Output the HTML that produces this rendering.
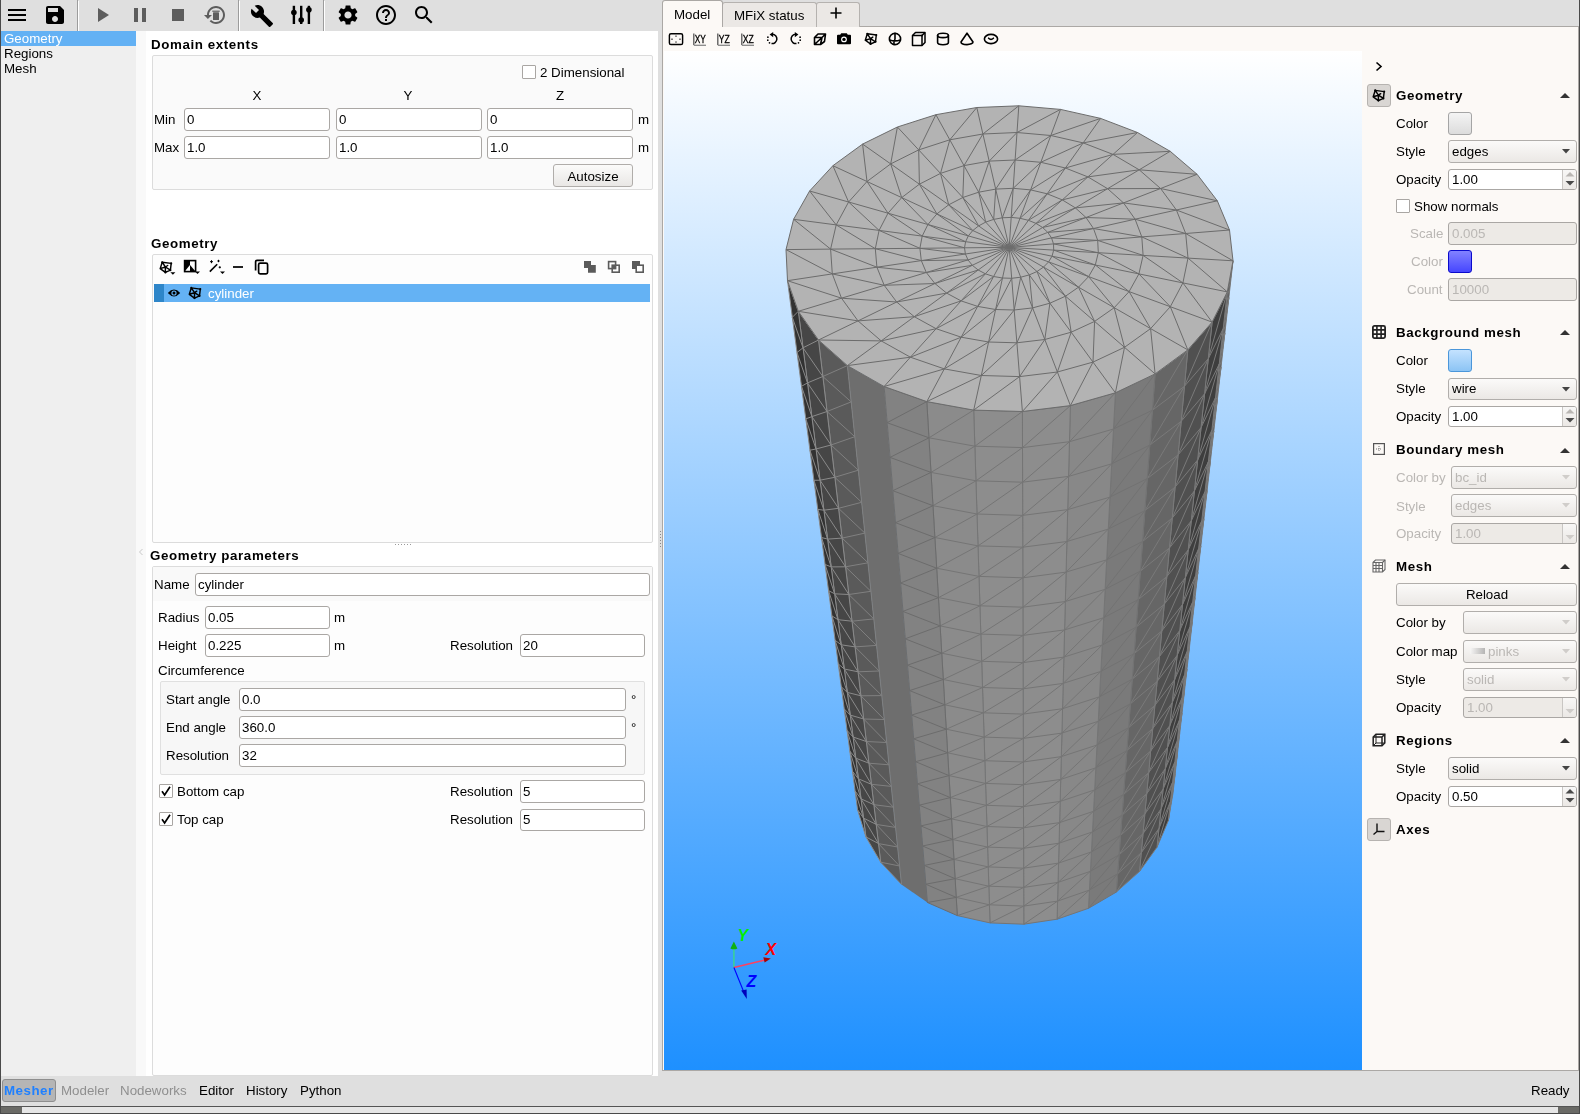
<!DOCTYPE html><html><head><meta charset='utf-8'><style>
html,body{margin:0;padding:0;width:1580px;height:1114px;overflow:hidden;background:#dfdfdf;font-family:"Liberation Sans",sans-serif;}
.t{position:absolute;white-space:nowrap;line-height:16px;font-family:"Liberation Sans",sans-serif;-webkit-font-smoothing:antialiased;will-change:transform;}
.b{position:absolute;}
</style></head><body>
<div class='b' style='left:1px;top:31px;width:135px;height:1045px;background:#efefef;'></div>
<div class='b' style='left:1px;top:31px;width:135px;height:15px;background:#63b1f4;'></div>
<div class='t' style='left:3.50px;top:31.38px;font-size:13.33px;color:#fff;'>Geometry</div>
<div class='t' style='left:3.50px;top:46.38px;font-size:13.33px;color:#000;'>Regions</div>
<div class='t' style='left:3.50px;top:60.98px;font-size:13.33px;color:#000;'>Mesh</div>
<div class='b' style='left:136px;top:31px;width:10px;height:1045px;background:#f9f9f9;'></div>
<div class='b' style='left:146px;top:31px;width:512px;height:1045px;background:#ffffff;'></div>
<div class='t' style='left:150.50px;top:36.78px;font-size:13.33px;color:#000;font-weight:bold;letter-spacing:0.6px;'>Domain extents</div>
<div class='b' style='left:152px;top:55px;width:501px;height:135px;background:#fafafa;border:1px solid #dcdcdc;border-radius:2px;box-sizing:border-box;'></div>
<div class='b' style='left:522px;top:65px;width:14px;height:14px;background:#fff;border:1px solid #a9a6a3;border-radius:1px;box-sizing:border-box;'></div>
<div class='t' style='left:540.40px;top:65.38px;font-size:13.33px;color:#000;'>2 Dimensional</div>
<div class='t' style='left:157.00px;width:200px;text-align:center;top:87.78px;font-size:13.33px;color:#000;'>X</div>
<div class='t' style='left:308.00px;width:200px;text-align:center;top:87.78px;font-size:13.33px;color:#000;'>Y</div>
<div class='t' style='left:460.00px;width:200px;text-align:center;top:87.78px;font-size:13.33px;color:#000;'>Z</div>
<div class='t' style='left:153.60px;top:112.18px;font-size:13.33px;color:#000;'>Min</div>
<div class='t' style='left:153.60px;top:140.38px;font-size:13.33px;color:#000;'>Max</div>
<div class='b' style='left:184px;top:108px;width:146px;height:23px;background:#ffffff;border:1px solid #aaa7a4;border-radius:3px;box-sizing:border-box;'></div>
<div class='t' style='left:186.50px;top:111.68px;font-size:13.33px;color:#000;'>0</div>
<div class='b' style='left:184px;top:136px;width:146px;height:23px;background:#ffffff;border:1px solid #aaa7a4;border-radius:3px;box-sizing:border-box;'></div>
<div class='t' style='left:186.50px;top:139.68px;font-size:13.33px;color:#000;'>1.0</div>
<div class='b' style='left:336px;top:108px;width:146px;height:23px;background:#ffffff;border:1px solid #aaa7a4;border-radius:3px;box-sizing:border-box;'></div>
<div class='t' style='left:338.50px;top:111.68px;font-size:13.33px;color:#000;'>0</div>
<div class='b' style='left:336px;top:136px;width:146px;height:23px;background:#ffffff;border:1px solid #aaa7a4;border-radius:3px;box-sizing:border-box;'></div>
<div class='t' style='left:338.50px;top:139.68px;font-size:13.33px;color:#000;'>1.0</div>
<div class='b' style='left:487px;top:108px;width:146px;height:23px;background:#ffffff;border:1px solid #aaa7a4;border-radius:3px;box-sizing:border-box;'></div>
<div class='t' style='left:489.50px;top:111.68px;font-size:13.33px;color:#000;'>0</div>
<div class='b' style='left:487px;top:136px;width:146px;height:23px;background:#ffffff;border:1px solid #aaa7a4;border-radius:3px;box-sizing:border-box;'></div>
<div class='t' style='left:489.50px;top:139.68px;font-size:13.33px;color:#000;'>1.0</div>
<div class='t' style='left:637.60px;top:112.18px;font-size:13.33px;color:#000;'>m</div>
<div class='t' style='left:637.60px;top:140.38px;font-size:13.33px;color:#000;'>m</div>
<div class='b' style='left:553px;top:164px;width:80px;height:23px;background:linear-gradient(#fbfbfa,#e9e7e5);border:1px solid #b0adaa;border-radius:3px;box-sizing:border-box;'></div>
<div class='t' style='left:493.00px;width:200px;text-align:center;top:168.88px;font-size:13.33px;color:#000;'>Autosize</div>
<div class='t' style='left:150.50px;top:236.08px;font-size:13.33px;color:#000;font-weight:bold;letter-spacing:0.6px;'>Geometry</div>
<div class='b' style='left:152px;top:254px;width:501px;height:289px;background:#fdfdfd;border:1px solid #dcdcdc;border-radius:2px;box-sizing:border-box;'></div>
<div class='b' style='left:154px;top:284px;width:496px;height:18px;background:#64b2f4;'></div>
<div class='b' style='left:154px;top:284px;width:10px;height:18px;background:#2e86c9;'></div>
<div class='t' style='left:208.40px;top:285.68px;font-size:13.33px;color:#fff;'>cylinder</div>
<svg class='b' style='left:159px;top:259px;' width='19' height='17' viewBox='0 0 19 17'><path d='M3.20 3.20 L12.20 4.40 L11.40 11.20 L6.40 13.40 L1.20 9.60Z M6.40 8.00L3.20 3.20 M6.40 8.00L11.40 11.20 M6.40 8.00L6.40 13.40 M6.40 8.00L1.20 9.60 M6.40 8.00L8.70 6.50' fill='none' stroke='#000' stroke-width='1.45' stroke-linejoin='round' stroke-linecap='round'/><circle cx='3.20' cy='3.20' r='1.05' fill='#000'/><circle cx='12.20' cy='4.40' r='1.05' fill='#000'/><circle cx='11.40' cy='11.20' r='1.05' fill='#000'/><circle cx='6.40' cy='13.40' r='1.05' fill='#000'/><path d='M11.4 13.2 h5 l-2.5 2.6z' fill='#000'/></svg>
<svg class='b' style='left:183px;top:259px;' width='19' height='17' viewBox='0 0 19 17'><rect x='1.6' y='1.6' width='11' height='11' fill='none' stroke='#000' stroke-width='1.6'/><path d='M1.6 1.6 H7 V6 L1.6 12.6Z' fill='#000'/><path d='M7 6 L12.6 12.6 H7Z' fill='#000'/><path d='M12 12.4 h5 l-2.5 2.6z' fill='#000'/></svg>
<svg class='b' style='left:208px;top:259px;' width='19' height='17' viewBox='0 0 19 17'><path d='M1.8 12.6 L9.2 5.2' stroke='#000' stroke-width='1.6'/><path d='M3.5 1.2 v3 M2 2.7 h3 M10.5 0.8 v2.4 M9.3 2 h2.4 M11.8 7.2 v2.2 M10.7 8.3 h2.2' stroke='#000' stroke-width='1'/><path d='M12 12.4 h5 l-2.5 2.6z' fill='#000'/></svg>
<div class='b' style='left:233px;top:266px;width:10px;height:2px;background:#222;'></div>
<svg class='b' style='left:254px;top:259px;' width='16' height='16' viewBox='0 0 16 16'><rect x='4.6' y='4.2' width='9' height='10.6' rx='1.5' fill='none' stroke='#000' stroke-width='1.7'/><path d='M1.6 11.5 V2.8 Q1.6 1.4 3 1.4 H10' fill='none' stroke='#000' stroke-width='1.7'/></svg>
<svg class='b' style='left:583px;top:260px;' width='14' height='14' viewBox='0 0 14 14'><path d='M1 1 H8 V5 H12.8 V12.8 H5 V8 H1Z' fill='#5b5b5b'/></svg>
<svg class='b' style='left:607px;top:260px;' width='14' height='14' viewBox='0 0 14 14'><rect x='1.6' y='1.6' width='7' height='7' fill='none' stroke='#5b5b5b' stroke-width='1.6'/><rect x='5.2' y='5.2' width='7' height='7' fill='none' stroke='#5b5b5b' stroke-width='1.6'/><rect x='5.2' y='5.2' width='3.4' height='3.4' fill='#5b5b5b'/></svg>
<svg class='b' style='left:631px;top:260px;' width='14' height='14' viewBox='0 0 14 14'><rect x='1' y='1' width='8' height='8' fill='#5b5b5b'/><rect x='5.2' y='5.2' width='7' height='7' fill='#fdfdfd' stroke='#5b5b5b' stroke-width='1.6'/></svg>
<svg class='b' style='left:167px;top:287px;' width='14' height='12' viewBox='0 0 14 12'><path d='M0.8 6 Q7 -0.8 13.2 6 Q7 12.8 0.8 6Z' fill='#000'/><circle cx='7' cy='6' r='2.6' fill='#64b2f4'/><circle cx='7' cy='6' r='1.5' fill='#000'/></svg>
<svg class='b' style='left:188px;top:286px;' width='14' height='14' viewBox='0 0 14 14'><path d='M3.30 1.90 L12.30 3.10 L11.50 9.90 L6.50 12.10 L1.30 8.30Z M6.50 6.70L3.30 1.90 M6.50 6.70L11.50 9.90 M6.50 6.70L6.50 12.10 M6.50 6.70L1.30 8.30 M6.50 6.70L8.80 5.20' fill='none' stroke='#000' stroke-width='1.45' stroke-linejoin='round' stroke-linecap='round'/><circle cx='3.30' cy='1.90' r='1.05' fill='#000'/><circle cx='12.30' cy='3.10' r='1.05' fill='#000'/><circle cx='11.50' cy='9.90' r='1.05' fill='#000'/><circle cx='6.50' cy='12.10' r='1.05' fill='#000'/></svg>
<div class='b' style='left:395px;top:544px;width:1px;height:1px;background:#999;'></div>
<div class='b' style='left:398px;top:544px;width:1px;height:1px;background:#999;'></div>
<div class='b' style='left:401px;top:544px;width:1px;height:1px;background:#999;'></div>
<div class='b' style='left:404px;top:544px;width:1px;height:1px;background:#999;'></div>
<div class='b' style='left:407px;top:544px;width:1px;height:1px;background:#999;'></div>
<div class='b' style='left:410px;top:544px;width:1px;height:1px;background:#999;'></div>
<svg class='b' style='left:138px;top:548px;' width='6' height='8' viewBox='0 0 6 8'><path d='M4.5 1 L1.5 4 L4.5 7' stroke='#c8c8c8' stroke-width='1' fill='none'/></svg>
<div class='t' style='left:150.00px;top:548.38px;font-size:13.33px;color:#000;font-weight:bold;letter-spacing:0.6px;'>Geometry parameters</div>
<div class='b' style='left:152px;top:566px;width:501px;height:510px;background:#fdfdfd;border:1px solid #dcdcdc;border-radius:2px;box-sizing:border-box;'></div>
<div class='b' style='left:153px;top:567px;width:499px;height:34px;background:#f9f9f9;'></div>
<div class='t' style='left:153.50px;top:577.38px;font-size:13.33px;color:#000;'>Name</div>
<div class='b' style='left:195px;top:573px;width:455px;height:23px;background:#ffffff;border:1px solid #aaa7a4;border-radius:3px;box-sizing:border-box;'></div>
<div class='t' style='left:197.50px;top:576.68px;font-size:13.33px;color:#000;'>cylinder</div>
<div class='t' style='left:158.30px;top:609.68px;font-size:13.33px;color:#000;'>Radius</div>
<div class='b' style='left:205px;top:606px;width:125px;height:23px;background:#ffffff;border:1px solid #aaa7a4;border-radius:3px;box-sizing:border-box;'></div>
<div class='t' style='left:207.50px;top:609.68px;font-size:13.33px;color:#000;'>0.05</div>
<div class='t' style='left:334.40px;top:609.68px;font-size:13.33px;color:#000;'>m</div>
<div class='t' style='left:158.30px;top:637.88px;font-size:13.33px;color:#000;'>Height</div>
<div class='b' style='left:205px;top:634px;width:125px;height:23px;background:#ffffff;border:1px solid #aaa7a4;border-radius:3px;box-sizing:border-box;'></div>
<div class='t' style='left:207.50px;top:637.68px;font-size:13.33px;color:#000;'>0.225</div>
<div class='t' style='left:334.40px;top:637.88px;font-size:13.33px;color:#000;'>m</div>
<div class='t' style='left:450.30px;top:637.88px;font-size:13.33px;color:#000;'>Resolution</div>
<div class='b' style='left:520px;top:634px;width:125px;height:23px;background:#ffffff;border:1px solid #aaa7a4;border-radius:3px;box-sizing:border-box;'></div>
<div class='t' style='left:522.50px;top:637.68px;font-size:13.33px;color:#000;'>20</div>
<div class='t' style='left:158.30px;top:663.48px;font-size:13.33px;color:#000;'>Circumference</div>
<div class='b' style='left:160px;top:681px;width:485px;height:94px;background:#f7f7f7;border:1px solid #e0e0e0;border-radius:2px;box-sizing:border-box;'></div>
<div class='t' style='left:166.20px;top:692.08px;font-size:13.33px;color:#000;'>Start angle</div>
<div class='b' style='left:239px;top:688px;width:387px;height:23px;background:#ffffff;border:1px solid #aaa7a4;border-radius:3px;box-sizing:border-box;'></div>
<div class='t' style='left:241.50px;top:691.68px;font-size:13.33px;color:#000;'>0.0</div>
<div class='t' style='left:631.00px;top:692.08px;font-size:13.33px;color:#000;'>°</div>
<div class='t' style='left:166.20px;top:720.08px;font-size:13.33px;color:#000;'>End angle</div>
<div class='b' style='left:239px;top:716px;width:387px;height:23px;background:#ffffff;border:1px solid #aaa7a4;border-radius:3px;box-sizing:border-box;'></div>
<div class='t' style='left:241.50px;top:719.68px;font-size:13.33px;color:#000;'>360.0</div>
<div class='t' style='left:631.00px;top:720.08px;font-size:13.33px;color:#000;'>°</div>
<div class='t' style='left:166.20px;top:748.08px;font-size:13.33px;color:#000;'>Resolution</div>
<div class='b' style='left:239px;top:744px;width:387px;height:23px;background:#ffffff;border:1px solid #aaa7a4;border-radius:3px;box-sizing:border-box;'></div>
<div class='t' style='left:241.50px;top:747.68px;font-size:13.33px;color:#000;'>32</div>
<div class='b' style='left:159px;top:784px;width:14px;height:14px;background:#fff;border:1px solid #a9a6a3;border-radius:1px;box-sizing:border-box;'></div>
<svg class='b' style='left:159px;top:784px;' width='14' height='14' viewBox='0 0 14 14'><path d='M3 7.2 L5.6 11 L11 2.8' stroke='#000' stroke-width='1.7' fill='none'/></svg>
<div class='t' style='left:177.40px;top:783.98px;font-size:13.33px;color:#000;'>Bottom cap</div>
<div class='t' style='left:450.30px;top:783.98px;font-size:13.33px;color:#000;'>Resolution</div>
<div class='b' style='left:520px;top:780px;width:125px;height:23px;background:#ffffff;border:1px solid #aaa7a4;border-radius:3px;box-sizing:border-box;'></div>
<div class='t' style='left:522.50px;top:783.68px;font-size:13.33px;color:#000;'>5</div>
<div class='b' style='left:159px;top:812px;width:14px;height:14px;background:#fff;border:1px solid #a9a6a3;border-radius:1px;box-sizing:border-box;'></div>
<svg class='b' style='left:159px;top:812px;' width='14' height='14' viewBox='0 0 14 14'><path d='M3 7.2 L5.6 11 L11 2.8' stroke='#000' stroke-width='1.7' fill='none'/></svg>
<div class='t' style='left:177.40px;top:811.98px;font-size:13.33px;color:#000;'>Top cap</div>
<div class='t' style='left:450.30px;top:811.98px;font-size:13.33px;color:#000;'>Resolution</div>
<div class='b' style='left:520px;top:809px;width:125px;height:22px;background:#ffffff;border:1px solid #aaa7a4;border-radius:3px;box-sizing:border-box;'></div>
<div class='t' style='left:522.50px;top:812.18px;font-size:13.33px;color:#000;'>5</div>
<div class='b' style='left:1px;top:0px;width:1578px;height:31px;background:#dfdfdf;'></div>
<svg class='b' style='left:5px;top:3px;' width='24.0' height='24.0' viewBox='0 0 24 24'><path d='M3 18h18v-2H3v2zm0-5h18v-2H3v2zm0-7v2h18V6H3z' fill='#000'/></svg>
<svg class='b' style='left:43px;top:3px;' width='24.0' height='24.0' viewBox='0 0 24 24'><path d='M17 3H5c-1.11 0-2 .9-2 2v14c0 1.1.89 2 2 2h14c1.1 0 2-.9 2-2V7l-4-4zm-5 16c-1.66 0-3-1.34-3-3s1.34-3 3-3 3 1.34 3 3-1.34 3-3 3zm3-10H5V5h10v4z' fill='#000'/></svg>
<div class='b' style='left:77px;top:0px;width:1px;height:31px;background:#9c9c9c;'></div>
<div class='b' style='left:78px;top:1px;width:1px;height:30px;background:#ffffff;'></div>
<svg class='b' style='left:90px;top:3px;' width='24.0' height='24.0' viewBox='0 0 24 24'><path d='M8 5v14l11-7z' fill='#5d5d5d'/></svg>
<svg class='b' style='left:128px;top:3px;' width='24.0' height='24.0' viewBox='0 0 24 24'><path d='M6 19h4V5H6v14zm8-14v14h4V5h-4z' fill='#5d5d5d'/></svg>
<svg class='b' style='left:166px;top:3px;' width='24.0' height='24.0' viewBox='0 0 24 24'><path d='M6 6h12v12H6z' fill='#5d5d5d'/></svg>
<svg class='b' style='left:203px;top:3px;' width='24' height='24' viewBox='0 0 24 24'><path d='M13 3c-4.97 0-9 4.03-9 9H1l3.9 3.9L9 12H6c0-3.87 3.13-7 7-7s7 3.13 7 7-3.13 7-7 7c-1.93 0-3.68-.79-4.94-2.06l-1.42 1.42C8.27 19.99 10.51 21 13 21c4.97 0 9-4.03 9-9s-4.03-9-9-9z' fill='#5d5d5d'/><rect x='10' y='9.3' width='6' height='7.7' rx='0.6' fill='#5d5d5d'/><rect x='9.3' y='7.6' width='7.4' height='1.2' fill='#5d5d5d'/></svg>
<div class='b' style='left:238px;top:0px;width:1px;height:31px;background:#9c9c9c;'></div>
<div class='b' style='left:239px;top:1px;width:1px;height:30px;background:#ffffff;'></div>
<svg class='b' style='left:250.4px;top:3.6px;' width='24.0' height='24.0' viewBox='0 0 24 24'><path d='M22.7 19l-9.1-9.1c.9-2.3.4-5-1.5-6.9-2-2-5-2.4-7.4-1.3L9 6 6 9 1.6 4.7C.4 7.1.9 10.1 2.9 12.1c1.9 1.9 4.6 2.4 6.9 1.5l9.1 9.1c.4.4 1 .4 1.4 0l2.3-2.3c.5-.4.5-1.1.1-1.4z' fill='#000'/></svg>
<svg class='b' style='left:289px;top:4px;' width='24' height='22' viewBox='0 0 24 22'><g fill='#000'><rect x='3.7' y='1.8' width='2.4' height='18.2'/><rect x='11' y='1.8' width='2.4' height='18.2'/><rect x='18.7' y='1.8' width='2.4' height='18.2'/><circle cx='4.9' cy='8.5' r='2.8'/><circle cx='12.2' cy='16' r='2.8'/><circle cx='19.9' cy='5.8' r='2.8'/></g></svg>
<div class='b' style='left:323px;top:0px;width:1px;height:31px;background:#9c9c9c;'></div>
<div class='b' style='left:324px;top:1px;width:1px;height:30px;background:#ffffff;'></div>
<svg class='b' style='left:335.5px;top:3px;' width='24.0' height='24.0' viewBox='0 0 24 24'><path d='M19.14 12.94c.04-.3.06-.61.06-.94 0-.32-.02-.64-.07-.94l2.03-1.58c.18-.14.23-.41.12-.61l-1.92-3.32c-.12-.22-.37-.29-.59-.22l-2.39.96c-.5-.38-1.03-.7-1.62-.94l-.36-2.54c-.04-.24-.24-.41-.48-.41h-3.84c-.24 0-.43.17-.47.41l-.36 2.54c-.59.24-1.13.57-1.62.94l-2.39-.96c-.22-.08-.47 0-.59.22L2.74 8.87c-.12.21-.08.47.12.61l2.03 1.58c-.05.3-.09.63-.09.94s.02.64.07.94l-2.03 1.58c-.18.14-.23.41-.12.61l1.92 3.32c.12.22.37.29.59.22l2.39-.96c.5.38 1.03.7 1.62.94l.36 2.54c.05.24.24.41.48.41h3.84c.24 0 .44-.17.47-.41l.36-2.54c.59-.24 1.13-.56 1.62-.94l2.39.96c.22.08.47 0 .59-.22l1.92-3.32c.12-.22.07-.47-.12-.61l-2.01-1.58zM12 15.6c-1.98 0-3.6-1.62-3.6-3.6s1.62-3.6 3.6-3.6 3.6 1.62 3.6 3.6-1.62 3.6-3.6 3.6z' fill='#000'/></svg>
<svg class='b' style='left:374px;top:3px;' width='24.0' height='24.0' viewBox='0 0 24 24'><path d='M11 18h2v-2h-2v2zm1-16C6.48 2 2 6.48 2 12s4.48 10 10 10 10-4.48 10-10S17.52 2 12 2zm0 18c-4.41 0-8-3.59-8-8s3.59-8 8-8 8 3.59 8 8-3.59 8-8 8zm0-14c-2.21 0-4 1.79-4 4h2c0-1.1.9-2 2-2s2 .9 2 2c0 2-3 1.75-3 5h2c0-2.25 3-2.5 3-5 0-2.21-1.79-4-4-4z' fill='#000'/></svg>
<svg class='b' style='left:412px;top:3.3px;' width='24.0' height='24.0' viewBox='0 0 24 24'><path d='M15.5 14h-.79l-.28-.27C15.41 12.59 16 11.11 16 9.5 16 5.91 13.09 3 9.5 3S3 5.91 3 9.5 5.91 16 9.5 16c1.61 0 3.09-.59 4.23-1.57l.27.28v.79l5 4.99L20.49 19l-4.99-5zm-6 0C7.01 14 5 11.99 5 9.5S7.01 5 9.5 5 14 7.01 14 9.5 11.99 14 9.5 14z' fill='#000'/></svg>
<div class='b' style='left:658px;top:31px;width:4px;height:1045px;background:#dfdfdf;'></div>
<div class='b' style='left:660px;top:531px;width:1px;height:1px;background:#8a8a8a;'></div>
<div class='b' style='left:660px;top:534px;width:1px;height:1px;background:#8a8a8a;'></div>
<div class='b' style='left:660px;top:537px;width:1px;height:1px;background:#8a8a8a;'></div>
<div class='b' style='left:660px;top:540px;width:1px;height:1px;background:#8a8a8a;'></div>
<div class='b' style='left:660px;top:543px;width:1px;height:1px;background:#8a8a8a;'></div>
<div class='b' style='left:660px;top:546px;width:1px;height:1px;background:#8a8a8a;'></div>
<div class='b' style='left:662px;top:26px;width:917px;height:1045px;background:#fcf9f6;border:1px solid #aba8a5;box-sizing:border-box;'></div>
<div class='b' style='left:722px;top:2px;width:95px;height:25px;background:#ebe8e5;border:1px solid #b5b2af;border-bottom:none;border-radius:3px 3px 0 0;box-sizing:border-box;'></div>
<div class='b' style='left:816px;top:2px;width:44px;height:25px;background:#ebe8e5;border:1px solid #b5b2af;border-bottom:none;border-radius:3px 3px 0 0;box-sizing:border-box;'></div>
<div class='b' style='left:662px;top:0px;width:61px;height:27px;background:#fcf9f6;border:1px solid #aba8a5;border-bottom:none;border-radius:3px 3px 0 0;box-sizing:border-box;'></div>
<div class='t' style='left:673.60px;top:7.38px;font-size:13.33px;color:#000;'>Model</div>
<div class='t' style='left:733.50px;top:8.38px;font-size:13.33px;color:#000;'>MFiX status</div>
<svg class='b' style='left:830px;top:7px;' width='12' height='12' viewBox='0 0 12 12'><path d='M5.2 0.5h1.6v4.7h4.7v1.6H6.8v4.7H5.2V6.8H0.5V5.2h4.7z' fill='#000'/></svg>
<div class='b' style='left:664px;top:51px;width:698px;height:1019px;background:linear-gradient(#ffffff,#1e90ff);'></div>
<svg class='b' style='left:664px;top:51px' width='698' height='1019' viewBox='664 51 698 1019'><polygon points='1233.0,260.8 1227.3,291.9 1168.3,820.7 1173.0,793.0' fill='#2a2a2a'/><path d='M1173.0,793.0L1168.3,820.7M1175.1,773.9L1170.4,801.7M1177.4,754.2L1172.6,782.2M1179.6,733.9L1174.8,762.1M1182.0,712.9L1177.1,741.4M1184.4,691.3L1179.5,720.0M1187.0,669.0L1182.0,697.9M1189.6,646.0L1184.5,675.1M1192.2,622.2L1187.2,651.5M1195.0,597.7L1189.9,627.1M1197.9,572.3L1192.7,601.9M1200.8,546.0L1195.6,575.8M1203.9,518.8L1198.6,548.8M1207.1,490.6L1201.8,520.8M1210.4,461.4L1205.0,491.7M1213.8,431.0L1208.4,461.6M1217.4,399.6L1211.9,430.2M1221.1,366.9L1215.5,397.7M1224.9,332.9L1219.3,363.8M1228.9,297.6L1223.2,328.6M1233.0,260.8L1227.3,291.9M1233.0,260.8L1173.0,793.0M1227.3,291.9L1168.3,820.7M1168.3,820.7L1175.1,773.9M1170.4,801.7L1177.4,754.2M1172.6,782.2L1179.6,733.9M1174.8,762.1L1182.0,712.9M1177.1,741.4L1184.4,691.3M1179.5,720.0L1187.0,669.0M1182.0,697.9L1189.6,646.0M1184.5,675.1L1192.2,622.2M1187.2,651.5L1195.0,597.7M1189.9,627.1L1197.9,572.3M1192.7,601.9L1200.8,546.0M1195.6,575.8L1203.9,518.8M1198.6,548.8L1207.1,490.6M1201.8,520.8L1210.4,461.4M1205.0,491.7L1213.8,431.0M1208.4,461.6L1217.4,399.6M1211.9,430.2L1221.1,366.9M1215.5,397.7L1224.9,332.9M1219.3,363.8L1228.9,297.6M1223.2,328.6L1233.0,260.8' stroke='#7a7a7a' stroke-width='1.0' fill='none'/><polygon points='1227.3,291.9 1212.1,322.1 1157.0,847.2 1168.3,820.7' fill='#3e3e3e'/><path d='M1168.3,820.7L1157.0,847.2M1170.4,801.7L1159.0,828.4M1172.6,782.2L1161.0,809.1M1174.8,762.1L1163.1,789.2M1177.1,741.4L1165.3,768.7M1179.5,720.0L1167.5,747.5M1182.0,697.9L1169.8,725.6M1184.5,675.1L1172.1,703.0M1187.2,651.5L1174.6,679.7M1189.9,627.1L1177.1,655.5M1192.7,601.9L1179.8,630.5M1195.6,575.8L1182.5,604.6M1198.6,548.8L1185.3,577.7M1201.8,520.8L1188.2,549.9M1205.0,491.7L1191.2,521.0M1208.4,461.6L1194.4,491.0M1211.9,430.2L1197.7,459.9M1215.5,397.7L1201.1,427.5M1219.3,363.8L1204.6,393.8M1223.2,328.6L1208.3,358.7M1227.3,291.9L1212.1,322.1M1227.3,291.9L1168.3,820.7M1212.1,322.1L1157.0,847.2M1157.0,847.2L1170.4,801.7M1159.0,828.4L1172.6,782.2M1161.0,809.1L1174.8,762.1M1163.1,789.2L1177.1,741.4M1165.3,768.7L1179.5,720.0M1167.5,747.5L1182.0,697.9M1169.8,725.6L1184.5,675.1M1172.1,703.0L1187.2,651.5M1174.6,679.7L1189.9,627.1M1177.1,655.5L1192.7,601.9M1179.8,630.5L1195.6,575.8M1182.5,604.6L1198.6,548.8M1185.3,577.7L1201.8,520.8M1188.2,549.9L1205.0,491.7M1191.2,521.0L1208.4,461.6M1194.4,491.0L1211.9,430.2M1197.7,459.9L1215.5,397.7M1201.1,427.5L1219.3,363.8M1204.6,393.8L1223.2,328.6M1208.3,358.7L1227.3,291.9' stroke='#7a7a7a' stroke-width='1.0' fill='none'/><polygon points='1212.1,322.1 1187.8,349.9 1139.5,871.4 1157.0,847.2' fill='#505050'/><path d='M1157.0,847.2L1139.5,871.4M1159.0,828.4L1141.2,852.8M1161.0,809.1L1143.0,833.7M1163.1,789.2L1144.8,814.0M1165.3,768.7L1146.7,793.7M1167.5,747.5L1148.6,772.7M1169.8,725.6L1150.6,751.0M1172.1,703.0L1152.7,728.6M1174.6,679.7L1154.9,705.4M1177.1,655.5L1157.1,681.5M1179.8,630.5L1159.4,656.6M1182.5,604.6L1161.8,630.9M1185.3,577.7L1164.2,604.3M1188.2,549.9L1166.8,576.6M1191.2,521.0L1169.5,547.9M1194.4,491.0L1172.2,518.1M1197.7,459.9L1175.1,487.1M1201.1,427.5L1178.1,454.9M1204.6,393.8L1181.2,421.3M1208.3,358.7L1184.4,386.3M1212.1,322.1L1187.8,349.9M1212.1,322.1L1157.0,847.2M1187.8,349.9L1139.5,871.4M1139.5,871.4L1159.0,828.4M1141.2,852.8L1161.0,809.1M1143.0,833.7L1163.1,789.2M1144.8,814.0L1165.3,768.7M1146.7,793.7L1167.5,747.5M1148.6,772.7L1169.8,725.6M1150.6,751.0L1172.1,703.0M1152.7,728.6L1174.6,679.7M1154.9,705.4L1177.1,655.5M1157.1,681.5L1179.8,630.5M1159.4,656.6L1182.5,604.6M1161.8,630.9L1185.3,577.7M1164.2,604.3L1188.2,549.9M1166.8,576.6L1191.2,521.0M1169.5,547.9L1194.4,491.0M1172.2,518.1L1197.7,459.9M1175.1,487.1L1201.1,427.5M1178.1,454.9L1204.6,393.8M1181.2,421.3L1208.3,358.7M1184.4,386.3L1212.1,322.1' stroke='#7a7a7a' stroke-width='1.0' fill='none'/><polygon points='1187.8,349.9 1155.1,373.9 1116.3,892.1 1139.5,871.4' fill='#666666'/><path d='M1139.5,871.4L1116.3,892.1M1141.2,852.8L1117.7,873.7M1143.0,833.7L1119.1,854.8M1144.8,814.0L1120.6,835.3M1146.7,793.7L1122.1,815.1M1148.6,772.7L1123.7,794.3M1150.6,751.0L1125.3,772.8M1152.7,728.6L1126.9,750.6M1154.9,705.4L1128.7,727.6M1157.1,681.5L1130.4,703.8M1159.4,656.6L1132.3,679.1M1161.8,630.9L1134.2,653.6M1164.2,604.3L1136.2,627.1M1166.8,576.6L1138.2,599.6M1169.5,547.9L1140.4,571.1M1172.2,518.1L1142.6,541.4M1175.1,487.1L1144.9,510.6M1178.1,454.9L1147.3,478.5M1181.2,421.3L1149.8,445.1M1184.4,386.3L1152.4,410.2M1187.8,349.9L1155.1,373.9M1187.8,349.9L1139.5,871.4M1155.1,373.9L1116.3,892.1M1116.3,892.1L1141.2,852.8M1117.7,873.7L1143.0,833.7M1119.1,854.8L1144.8,814.0M1120.6,835.3L1146.7,793.7M1122.1,815.1L1148.6,772.7M1123.7,794.3L1150.6,751.0M1125.3,772.8L1152.7,728.6M1126.9,750.6L1154.9,705.4M1128.7,727.6L1157.1,681.5M1130.4,703.8L1159.4,656.6M1132.3,679.1L1161.8,630.9M1134.2,653.6L1164.2,604.3M1136.2,627.1L1166.8,576.6M1138.2,599.6L1169.5,547.9M1140.4,571.1L1172.2,518.1M1142.6,541.4L1175.1,487.1M1144.9,510.6L1178.1,454.9M1147.3,478.5L1181.2,421.3M1149.8,445.1L1184.4,386.3M1152.4,410.2L1187.8,349.9' stroke='#7a7a7a' stroke-width='1.0' fill='none'/><polygon points='1155.1,373.9 1115.4,392.8 1088.5,908.3 1116.3,892.1' fill='#7a7a7a'/><path d='M1116.3,892.1L1088.5,908.3M1117.7,873.7L1089.4,890.1M1119.1,854.8L1090.4,871.3M1120.6,835.3L1091.4,851.9M1122.1,815.1L1092.5,831.9M1123.7,794.3L1093.5,811.3M1125.3,772.8L1094.7,789.9M1126.9,750.6L1095.8,767.8M1128.7,727.6L1097.0,745.0M1130.4,703.8L1098.2,721.3M1132.3,679.1L1099.5,696.8M1134.2,653.6L1100.9,671.4M1136.2,627.1L1102.2,645.0M1138.2,599.6L1103.7,617.7M1140.4,571.1L1105.1,589.3M1142.6,541.4L1106.7,559.8M1144.9,510.6L1108.3,529.1M1147.3,478.5L1110.0,497.1M1149.8,445.1L1111.7,463.8M1152.4,410.2L1113.5,429.0M1155.1,373.9L1115.4,392.8M1155.1,373.9L1116.3,892.1M1115.4,392.8L1088.5,908.3M1088.5,908.3L1117.7,873.7M1089.4,890.1L1119.1,854.8M1090.4,871.3L1120.6,835.3M1091.4,851.9L1122.1,815.1M1092.5,831.9L1123.7,794.3M1093.5,811.3L1125.3,772.8M1094.7,789.9L1126.9,750.6M1095.8,767.8L1128.7,727.6M1097.0,745.0L1130.4,703.8M1098.2,721.3L1132.3,679.1M1099.5,696.8L1134.2,653.6M1100.9,671.4L1136.2,627.1M1102.2,645.0L1138.2,599.6M1103.7,617.7L1140.4,571.1M1105.1,589.3L1142.6,541.4M1106.7,559.8L1144.9,510.6M1108.3,529.1L1147.3,478.5M1110.0,497.1L1149.8,445.1M1111.7,463.8L1152.4,410.2M1113.5,429.0L1155.1,373.9' stroke='#727272' stroke-width='1.0' fill='none'/><polygon points='1115.4,392.8 1070.4,405.6 1057.1,919.2 1088.5,908.3' fill='#888888'/><path d='M1088.5,908.3L1057.1,919.2M1089.4,890.1L1057.6,901.1M1090.4,871.3L1058.1,882.4M1091.4,851.9L1058.6,863.1M1092.5,831.9L1059.1,843.2M1093.5,811.3L1059.6,822.6M1094.7,789.9L1060.2,801.4M1095.8,767.8L1060.8,779.4M1097.0,745.0L1061.4,756.6M1098.2,721.3L1062.0,733.1M1099.5,696.8L1062.6,708.7M1100.9,671.4L1063.2,683.4M1102.2,645.0L1063.9,657.1M1103.7,617.7L1064.6,629.9M1105.1,589.3L1065.4,601.5M1106.7,559.8L1066.1,572.1M1108.3,529.1L1066.9,541.5M1110.0,497.1L1067.8,509.6M1111.7,463.8L1068.6,476.4M1113.5,429.0L1069.5,441.7M1115.4,392.8L1070.4,405.6M1115.4,392.8L1088.5,908.3M1070.4,405.6L1057.1,919.2M1057.1,919.2L1089.4,890.1M1057.6,901.1L1090.4,871.3M1058.1,882.4L1091.4,851.9M1058.6,863.1L1092.5,831.9M1059.1,843.2L1093.5,811.3M1059.6,822.6L1094.7,789.9M1060.2,801.4L1095.8,767.8M1060.8,779.4L1097.0,745.0M1061.4,756.6L1098.2,721.3M1062.0,733.1L1099.5,696.8M1062.6,708.7L1100.9,671.4M1063.2,683.4L1102.2,645.0M1063.9,657.1L1103.7,617.7M1064.6,629.9L1105.1,589.3M1065.4,601.5L1106.7,559.8M1066.1,572.1L1108.3,529.1M1066.9,541.5L1110.0,497.1M1067.8,509.6L1111.7,463.8M1068.6,476.4L1113.5,429.0M1069.5,441.7L1115.4,392.8' stroke='#757575' stroke-width='1.0' fill='none'/><polygon points='1070.4,405.6 1022.4,411.5 1023.8,924.2 1057.1,919.2' fill='#8d8d8d'/><path d='M1057.1,919.2L1023.8,924.2M1057.6,901.1L1023.7,906.1M1058.1,882.4L1023.7,887.4M1058.6,863.1L1023.6,868.2M1059.1,843.2L1023.6,848.3M1059.6,822.6L1023.5,827.8M1060.2,801.4L1023.5,806.6M1060.8,779.4L1023.4,784.7M1061.4,756.6L1023.3,762.0M1062.0,733.1L1023.3,738.4M1062.6,708.7L1023.2,714.1M1063.2,683.4L1023.2,688.8M1063.9,657.1L1023.1,662.6M1064.6,629.9L1023.0,635.4M1065.4,601.5L1022.9,607.2M1066.1,572.1L1022.9,577.8M1066.9,541.5L1022.8,547.2M1067.8,509.6L1022.7,515.4M1068.6,476.4L1022.6,482.2M1069.5,441.7L1022.5,447.6M1070.4,405.6L1022.4,411.5M1070.4,405.6L1057.1,919.2M1022.4,411.5L1023.8,924.2M1023.8,924.2L1057.6,901.1M1023.7,906.1L1058.1,882.4M1023.7,887.4L1058.6,863.1M1023.6,868.2L1059.1,843.2M1023.6,848.3L1059.6,822.6M1023.5,827.8L1060.2,801.4M1023.5,806.6L1060.8,779.4M1023.4,784.7L1061.4,756.6M1023.3,762.0L1062.0,733.1M1023.3,738.4L1062.6,708.7M1023.2,714.1L1063.2,683.4M1023.2,688.8L1063.9,657.1M1023.1,662.6L1064.6,629.9M1023.0,635.4L1065.4,601.5M1022.9,607.2L1066.1,572.1M1022.9,577.8L1066.9,541.5M1022.8,547.2L1067.8,509.6M1022.7,515.4L1068.6,476.4M1022.6,482.2L1069.5,441.7M1022.5,447.6L1070.4,405.6' stroke='#757575' stroke-width='1.0' fill='none'/><polygon points='1022.4,411.5 973.7,410.1 990.0,922.9 1023.8,924.2' fill='#8d8d8d'/><path d='M1023.8,924.2L990.0,922.9M1023.7,906.1L989.4,904.8M1023.7,887.4L988.8,886.2M1023.6,868.2L988.2,866.9M1023.6,848.3L987.6,847.1M1023.5,827.8L986.9,826.5M1023.5,806.6L986.2,805.3M1023.4,784.7L985.5,783.4M1023.3,762.0L984.8,760.7M1023.3,738.4L984.1,737.1M1023.2,714.1L983.3,712.8M1023.2,688.8L982.5,687.5M1023.1,662.6L981.7,661.3M1023.0,635.4L980.8,634.1M1022.9,607.2L979.9,605.8M1022.9,577.8L979.0,576.4M1022.8,547.2L978.0,545.9M1022.7,515.4L977.0,514.0M1022.6,482.2L976.0,480.8M1022.5,447.6L974.9,446.2M1022.4,411.5L973.7,410.1M1022.4,411.5L1023.8,924.2M973.7,410.1L990.0,922.9M990.0,922.9L1023.7,906.1M989.4,904.8L1023.7,887.4M988.8,886.2L1023.6,868.2M988.2,866.9L1023.6,848.3M987.6,847.1L1023.5,827.8M986.9,826.5L1023.5,806.6M986.2,805.3L1023.4,784.7M985.5,783.4L1023.3,762.0M984.8,760.7L1023.3,738.4M984.1,737.1L1023.2,714.1M983.3,712.8L1023.2,688.8M982.5,687.5L1023.1,662.6M981.7,661.3L1023.0,635.4M980.8,634.1L1022.9,607.2M979.9,605.8L1022.9,577.8M979.0,576.4L1022.8,547.2M978.0,545.9L1022.7,515.4M977.0,514.0L1022.6,482.2M976.0,480.8L1022.5,447.6M974.9,446.2L1022.4,411.5' stroke='#757575' stroke-width='1.0' fill='none'/><polygon points='973.7,410.1 926.8,401.6 957.3,915.6 990.0,922.9' fill='#8b8b8b'/><path d='M990.0,922.9L957.3,915.6M989.4,904.8L956.2,897.4M988.8,886.2L955.1,878.7M988.2,866.9L954.0,859.4M987.6,847.1L952.8,839.5M986.9,826.5L951.6,818.9M986.2,805.3L950.3,797.6M985.5,783.4L949.0,775.6M984.8,760.7L947.7,752.8M984.1,737.1L946.3,729.2M983.3,712.8L944.8,704.8M982.5,687.5L943.3,679.5M981.7,661.3L941.8,653.2M980.8,634.1L940.1,625.9M979.9,605.8L938.5,597.6M979.0,576.4L936.7,568.2M978.0,545.9L934.9,537.5M977.0,514.0L933.0,505.7M976.0,480.8L931.0,472.4M974.9,446.2L929.0,437.8M973.7,410.1L926.8,401.6M973.7,410.1L990.0,922.9M926.8,401.6L957.3,915.6M957.3,915.6L989.4,904.8M956.2,897.4L988.8,886.2M955.1,878.7L988.2,866.9M954.0,859.4L987.6,847.1M952.8,839.5L986.9,826.5M951.6,818.9L986.2,805.3M950.3,797.6L985.5,783.4M949.0,775.6L984.8,760.7M947.7,752.8L984.1,737.1M946.3,729.2L983.3,712.8M944.8,704.8L982.5,687.5M943.3,679.5L981.7,661.3M941.8,653.2L980.8,634.1M940.1,625.9L979.9,605.8M938.5,597.6L979.0,576.4M936.7,568.2L978.0,545.9M934.9,537.5L977.0,514.0M933.0,505.7L976.0,480.8M931.0,472.4L974.9,446.2M929.0,437.8L973.7,410.1' stroke='#757575' stroke-width='1.0' fill='none'/><polygon points='926.8,401.6 884.1,386.5 927.4,902.5 957.3,915.6' fill='#828282'/><path d='M957.3,915.6L927.4,902.5M956.2,897.4L925.8,884.2M955.1,878.7L924.3,865.4M954.0,859.4L922.6,846.0M952.8,839.5L920.9,825.9M951.6,818.9L919.2,805.2M950.3,797.6L917.4,783.8M949.0,775.6L915.6,761.7M947.7,752.8L913.6,738.8M946.3,729.2L911.6,715.1M944.8,704.8L909.6,690.6M943.3,679.5L907.4,665.2M941.8,653.2L905.2,638.8M940.1,625.9L902.9,611.4M938.5,597.6L900.6,583.0M936.7,568.2L898.1,553.4M934.9,537.5L895.5,522.7M933.0,505.7L892.8,490.7M931.0,472.4L890.0,457.4M929.0,437.8L887.1,422.7M926.8,401.6L884.1,386.5M926.8,401.6L957.3,915.6M884.1,386.5L927.4,902.5M927.4,902.5L956.2,897.4M925.8,884.2L955.1,878.7M924.3,865.4L954.0,859.4M922.6,846.0L952.8,839.5M920.9,825.9L951.6,818.9M919.2,805.2L950.3,797.6M917.4,783.8L949.0,775.6M915.6,761.7L947.7,752.8M913.6,738.8L946.3,729.2M911.6,715.1L944.8,704.8M909.6,690.6L943.3,679.5M907.4,665.2L941.8,653.2M905.2,638.8L940.1,625.9M902.9,611.4L938.5,597.6M900.6,583.0L936.7,568.2M898.1,553.4L934.9,537.5M895.5,522.7L933.0,505.7M892.8,490.7L931.0,472.4M890.0,457.4L929.0,437.8M887.1,422.7L926.8,401.6' stroke='#6c6c6c' stroke-width='1.0' fill='none'/><polygon points='884.1,386.5 847.4,365.6 901.5,884.4 927.4,902.5' fill='#6e6e6e'/><polygon points='847.4,365.6 818.5,340.0 880.7,862.2 901.5,884.4' fill='#5a5a5a'/><path d='M901.5,884.4L880.7,862.2M899.5,866.0L878.5,843.6M897.6,847.0L876.2,824.4M895.5,827.4L873.9,804.7M893.4,807.2L871.4,784.3M891.3,786.4L868.9,763.2M889.0,764.8L866.3,741.5M886.7,742.5L863.7,719.0M884.3,719.5L860.9,695.8M881.8,695.6L858.0,671.8M879.2,671.0L855.1,646.9M876.6,645.4L852.0,621.2M873.8,618.9L848.8,594.5M870.9,591.3L845.5,566.8M868.0,562.8L842.1,538.1M864.9,533.1L838.5,508.3M861.7,502.3L834.8,477.3M858.3,470.2L831.0,445.0M854.8,436.7L827.0,411.5M851.2,401.9L822.8,376.5M847.4,365.6L818.5,340.0M847.4,365.6L901.5,884.4M818.5,340.0L880.7,862.2M880.7,862.2L899.5,866.0M878.5,843.6L897.6,847.0M876.2,824.4L895.5,827.4M873.9,804.7L893.4,807.2M871.4,784.3L891.3,786.4M868.9,763.2L889.0,764.8M866.3,741.5L886.7,742.5M863.7,719.0L884.3,719.5M860.9,695.8L881.8,695.6M858.0,671.8L879.2,671.0M855.1,646.9L876.6,645.4M852.0,621.2L873.8,618.9M848.8,594.5L870.9,591.3M845.5,566.8L868.0,562.8M842.1,538.1L864.9,533.1M838.5,508.3L861.7,502.3M834.8,477.3L858.3,470.2M831.0,445.0L854.8,436.7M827.0,411.5L851.2,401.9M822.8,376.5L847.4,365.6' stroke='#808080' stroke-width='1.0' fill='none'/><polygon points='818.5,340.0 798.3,311.3 865.9,836.9 880.7,862.2' fill='#464646'/><path d='M880.7,862.2L865.9,836.9M878.5,843.6L863.5,818.1M876.2,824.4L861.0,798.8M873.9,804.7L858.4,778.8M871.4,784.3L855.8,758.2M868.9,763.2L853.1,737.0M866.3,741.5L850.2,715.1M863.7,719.0L847.3,692.4M860.9,695.8L844.3,669.0M858.0,671.8L841.2,644.8M855.1,646.9L838.0,619.7M852.0,621.2L834.6,593.8M848.8,594.5L831.2,566.9M845.5,566.8L827.6,539.1M842.1,538.1L823.9,510.2M838.5,508.3L820.0,480.2M834.8,477.3L816.0,449.0M831.0,445.0L811.9,416.6M827.0,411.5L807.5,382.9M822.8,376.5L803.0,347.8M818.5,340.0L798.3,311.3M818.5,340.0L880.7,862.2M798.3,311.3L865.9,836.9M865.9,836.9L878.5,843.6M863.5,818.1L876.2,824.4M861.0,798.8L873.9,804.7M858.4,778.8L871.4,784.3M855.8,758.2L868.9,763.2M853.1,737.0L866.3,741.5M850.2,715.1L863.7,719.0M847.3,692.4L860.9,695.8M844.3,669.0L858.0,671.8M841.2,644.8L855.1,646.9M838.0,619.7L852.0,621.2M834.6,593.8L848.8,594.5M831.2,566.9L845.5,566.8M827.6,539.1L842.1,538.1M823.9,510.2L838.5,508.3M820.0,480.2L834.8,477.3M816.0,449.0L831.0,445.0M811.9,416.6L827.0,411.5M807.5,382.9L822.8,376.5M803.0,347.8L818.5,340.0' stroke='#8a8a8a' stroke-width='1.0' fill='none'/><polygon points='798.3,311.3 787.5,280.7 857.6,809.9 865.9,836.9' fill='#323232'/><path d='M865.9,836.9L857.6,809.9M863.5,818.1L855.0,790.9M861.0,798.8L852.5,771.3M858.4,778.8L849.8,751.1M855.8,758.2L847.0,730.4M853.1,737.0L844.2,708.9M850.2,715.1L841.3,686.8M847.3,692.4L838.2,663.9M844.3,669.0L835.1,640.3M841.2,644.8L831.9,615.9M838.0,619.7L828.5,590.6M834.6,593.8L825.1,564.5M831.2,566.9L821.5,537.5M827.6,539.1L817.8,509.4M823.9,510.2L813.9,480.3M820.0,480.2L809.9,450.2M816.0,449.0L805.8,418.9M811.9,416.6L801.5,386.3M807.5,382.9L797.0,352.5M803.0,347.8L792.3,317.3M798.3,311.3L787.5,280.7M798.3,311.3L865.9,836.9M787.5,280.7L857.6,809.9M857.6,809.9L863.5,818.1M855.0,790.9L861.0,798.8M852.5,771.3L858.4,778.8M849.8,751.1L855.8,758.2M847.0,730.4L853.1,737.0M844.2,708.9L850.2,715.1M841.3,686.8L847.3,692.4M838.2,663.9L844.3,669.0M835.1,640.3L841.2,644.8M831.9,615.9L838.0,619.7M828.5,590.6L834.6,593.8M825.1,564.5L831.2,566.9M821.5,537.5L827.6,539.1M817.8,509.4L823.9,510.2M813.9,480.3L820.0,480.2M809.9,450.2L816.0,449.0M805.8,418.9L811.9,416.6M801.5,386.3L807.5,382.9M797.0,352.5L803.0,347.8M792.3,317.3L798.3,311.3' stroke='#8a8a8a' stroke-width='1.0' fill='none'/><polygon points='976.8,107.5 1018.8,105.8 1060.5,109.4 1100.6,118.4 1137.5,132.5 1170.2,151.3 1197.1,174.3 1217.3,200.8 1229.5,230.0 1233.0,260.8 1227.3,291.9 1212.1,322.1 1187.8,349.9 1155.1,373.9 1115.4,392.8 1070.4,405.6 1022.4,411.5 973.7,410.1 926.8,401.6 884.1,386.5 847.4,365.6 818.5,340.0 798.3,311.3 787.5,280.7 786.0,249.6 793.6,219.3 809.6,191.0 832.9,165.7 862.6,144.1 897.4,127.0 935.9,114.7' fill='#b3b3b3'/><path d='M1009.2,247.4L1002.3,217.8M1009.2,247.4L1011.2,217.4M1009.2,247.4L1020.0,218.3M1009.2,247.4L1028.4,220.3M1009.2,247.4L1036.0,223.4M1009.2,247.4L1042.6,227.5M1009.2,247.4L1047.8,232.4M1009.2,247.4L1051.5,237.9M1009.2,247.4L1053.5,243.9M1009.2,247.4L1053.7,250.1M1009.2,247.4L1052.0,256.2M1009.2,247.4L1048.6,261.9M1009.2,247.4L1043.5,267.1M1009.2,247.4L1037.0,271.5M1009.2,247.4L1029.3,274.9M1009.2,247.4L1020.7,277.2M1009.2,247.4L1011.7,278.3M1009.2,247.4L1002.5,278.0M1009.2,247.4L993.6,276.5M1009.2,247.4L985.4,273.8M1009.2,247.4L978.2,270.0M1009.2,247.4L972.3,265.3M1009.2,247.4L968.0,259.9M1009.2,247.4L965.4,254.0M1009.2,247.4L964.5,247.8M1009.2,247.4L965.6,241.7M1009.2,247.4L968.3,235.9M1009.2,247.4L972.8,230.5M1009.2,247.4L978.6,225.9M1009.2,247.4L985.7,222.1M1009.2,247.4L993.7,219.4M1002.3,217.8L1011.2,217.4L1020.0,218.3L1028.4,220.3L1036.0,223.4L1042.6,227.5L1047.8,232.4L1051.5,237.9L1053.5,243.9L1053.7,250.1L1052.0,256.2L1048.6,261.9L1043.5,267.1L1037.0,271.5L1029.3,274.9L1020.7,277.2L1011.7,278.3L1002.5,278.0L993.6,276.5L985.4,273.8L978.2,270.0L972.3,265.3L968.0,259.9L965.4,254.0L964.5,247.8L965.6,241.7L968.3,235.9L972.8,230.5L978.6,225.9L985.7,222.1L993.7,219.4ZM1002.3,217.8L995.7,189.1M1002.3,217.8L1013.2,188.3M1011.2,217.4L1013.2,188.3M1011.2,217.4L1030.6,189.9M1020.0,218.3L1030.6,189.9M1020.0,218.3L1047.2,193.8M1028.4,220.3L1047.2,193.8M1028.4,220.3L1062.3,199.9M1036.0,223.4L1062.3,199.9M1036.0,223.4L1075.4,207.9M1042.6,227.5L1075.4,207.9M1042.6,227.5L1086.0,217.5M1047.8,232.4L1086.0,217.5M1047.8,232.4L1093.5,228.5M1051.5,237.9L1093.5,228.5M1051.5,237.9L1097.7,240.4M1053.5,243.9L1097.7,240.4M1053.5,243.9L1098.3,252.7M1053.7,250.1L1098.3,252.7M1053.7,250.1L1095.3,265.0M1052.0,256.2L1095.3,265.0M1052.0,256.2L1088.6,276.6M1048.6,261.9L1088.6,276.6M1048.6,261.9L1078.5,287.2M1043.5,267.1L1078.5,287.2M1043.5,267.1L1065.5,296.2M1037.0,271.5L1065.5,296.2M1037.0,271.5L1049.9,303.2M1029.3,274.9L1049.9,303.2M1029.3,274.9L1032.6,307.9M1020.7,277.2L1032.6,307.9M1020.7,277.2L1014.2,310.0M1011.7,278.3L1014.2,310.0M1011.7,278.3L995.6,309.5M1002.5,278.0L995.6,309.5M1002.5,278.0L977.7,306.4M993.6,276.5L977.7,306.4M993.6,276.5L961.1,300.9M985.4,273.8L961.1,300.9M985.4,273.8L946.6,293.1M978.2,270.0L946.6,293.1M978.2,270.0L934.9,283.5M972.3,265.3L934.9,283.5M972.3,265.3L926.3,272.5M968.0,259.9L926.3,272.5M968.0,259.9L921.3,260.6M965.4,254.0L921.3,260.6M965.4,254.0L919.9,248.3M964.5,247.8L919.9,248.3M964.5,247.8L922.2,236.1M965.6,241.7L922.2,236.1M965.6,241.7L927.9,224.5M968.3,235.9L927.9,224.5M968.3,235.9L936.9,213.9M972.8,230.5L936.9,213.9M972.8,230.5L948.7,204.8M978.6,225.9L948.7,204.8M978.6,225.9L962.8,197.5M985.7,222.1L962.8,197.5M985.7,222.1L978.7,192.2M993.7,219.4L978.7,192.2M993.7,219.4L995.7,189.1M995.7,189.1L1013.2,188.3L1030.6,189.9L1047.2,193.8L1062.3,199.9L1075.4,207.9L1086.0,217.5L1093.5,228.5L1097.7,240.4L1098.3,252.7L1095.3,265.0L1088.6,276.6L1078.5,287.2L1065.5,296.2L1049.9,303.2L1032.6,307.9L1014.2,310.0L995.6,309.5L977.7,306.4L961.1,300.9L946.6,293.1L934.9,283.5L926.3,272.5L921.3,260.6L919.9,248.3L922.2,236.1L927.9,224.5L936.9,213.9L948.7,204.8L962.8,197.5L978.7,192.2ZM995.7,189.1L989.2,161.1M995.7,189.1L1015.1,160.0M1013.2,188.3L1015.1,160.0M1013.2,188.3L1040.8,162.3M1030.6,189.9L1040.8,162.3M1030.6,189.9L1065.4,168.0M1047.2,193.8L1065.4,168.0M1047.2,193.8L1087.9,176.9M1062.3,199.9L1087.9,176.9M1062.3,199.9L1107.6,188.7M1075.4,207.9L1107.6,188.7M1075.4,207.9L1123.5,202.9M1086.0,217.5L1123.5,202.9M1086.0,217.5L1135.1,219.2M1093.5,228.5L1135.1,219.2M1093.5,228.5L1141.8,236.9M1097.7,240.4L1141.8,236.9M1097.7,240.4L1143.1,255.4M1098.3,252.7L1143.1,255.4M1098.3,252.7L1138.9,273.9M1095.3,265.0L1138.9,273.9M1095.3,265.0L1129.1,291.6M1088.6,276.6L1129.1,291.6M1088.6,276.6L1114.2,307.7M1078.5,287.2L1114.2,307.7M1078.5,287.2L1094.6,321.4M1065.5,296.2L1094.6,321.4M1065.5,296.2L1071.2,332.2M1049.9,303.2L1071.2,332.2M1049.9,303.2L1044.8,339.5M1032.6,307.9L1044.8,339.5M1032.6,307.9L1016.9,342.8M1014.2,310.0L1016.9,342.8M1014.2,310.0L988.6,342.0M995.6,309.5L988.6,342.0M995.6,309.5L961.2,337.2M977.7,306.4L961.2,337.2M977.7,306.4L936.1,328.7M961.1,300.9L936.1,328.7M961.1,300.9L914.3,316.7M946.6,293.1L914.3,316.7M946.6,293.1L896.7,302.0M934.9,283.5L896.7,302.0M934.9,283.5L884.2,285.3M926.3,272.5L884.2,285.3M926.3,272.5L876.9,267.2M921.3,260.6L876.9,267.2M921.3,260.6L875.3,248.7M919.9,248.3L875.3,248.7M919.9,248.3L879.1,230.4M922.2,236.1L879.1,230.4M922.2,236.1L888.0,213.2M927.9,224.5L888.0,213.2M927.9,224.5L901.7,197.6M936.9,213.9L901.7,197.6M936.9,213.9L919.4,184.2M948.7,204.8L919.4,184.2M948.7,204.8L940.5,173.4M962.8,197.5L940.5,173.4M962.8,197.5L964.0,165.6M978.7,192.2L964.0,165.6M978.7,192.2L989.2,161.1M989.2,161.1L1015.1,160.0L1040.8,162.3L1065.4,168.0L1087.9,176.9L1107.6,188.7L1123.5,202.9L1135.1,219.2L1141.8,236.9L1143.1,255.4L1138.9,273.9L1129.1,291.6L1114.2,307.7L1094.6,321.4L1071.2,332.2L1044.8,339.5L1016.9,342.8L988.6,342.0L961.2,337.2L936.1,328.7L914.3,316.7L896.7,302.0L884.2,285.3L876.9,267.2L875.3,248.7L879.1,230.4L888.0,213.2L901.7,197.6L919.4,184.2L940.5,173.4L964.0,165.6ZM989.2,161.1L982.9,134.0M989.2,161.1L1017.0,132.5M1015.1,160.0L1017.0,132.5M1015.1,160.0L1050.8,135.5M1040.8,162.3L1050.8,135.5M1040.8,162.3L1083.2,142.9M1065.4,168.0L1083.2,142.9M1065.4,168.0L1113.0,154.4M1087.9,176.9L1113.0,154.4M1087.9,176.9L1139.2,169.8M1107.6,188.7L1139.2,169.8M1107.6,188.7L1160.6,188.5M1123.5,202.9L1160.6,188.5M1123.5,202.9L1176.4,210.0M1135.1,219.2L1176.4,210.0M1135.1,219.2L1185.7,233.5M1141.8,236.9L1185.7,233.5M1141.8,236.9L1188.0,258.1M1143.1,255.4L1188.0,258.1M1143.1,255.4L1182.9,282.9M1138.9,273.9L1182.9,282.9M1138.9,273.9L1170.3,306.7M1129.1,291.6L1170.3,306.7M1129.1,291.6L1150.6,328.6M1114.2,307.7L1150.6,328.6M1114.2,307.7L1124.5,347.3M1094.6,321.4L1124.5,347.3M1094.6,321.4L1093.0,362.1M1071.2,332.2L1093.0,362.1M1071.2,332.2L1057.4,372.0M1044.8,339.5L1057.4,372.0M1044.8,339.5L1019.6,376.6M1016.9,342.8L1019.6,376.6M1016.9,342.8L981.3,375.5M988.6,342.0L981.3,375.5M988.6,342.0L944.3,368.9M961.2,337.2L944.3,368.9M961.2,337.2L910.4,357.2M936.1,328.7L910.4,357.2M936.1,328.7L881.2,340.9M914.3,316.7L881.2,340.9M914.3,316.7L858.0,320.9M896.7,302.0L858.0,320.9M896.7,302.0L841.5,298.2M884.2,285.3L841.5,298.2M884.2,285.3L832.3,273.9M876.9,267.2L832.3,273.9M876.9,267.2L830.6,249.1M875.3,248.7L830.6,249.1M875.3,248.7L836.2,224.9M879.1,230.4L836.2,224.9M879.1,230.4L848.6,202.0M888.0,213.2L848.6,202.0M888.0,213.2L867.0,181.5M901.7,197.6L867.0,181.5M901.7,197.6L890.7,163.9M919.4,184.2L890.7,163.9M919.4,184.2L918.7,149.9M940.5,173.4L918.7,149.9M940.5,173.4L949.8,139.8M964.0,165.6L949.8,139.8M964.0,165.6L982.9,134.0M982.9,134.0L1017.0,132.5L1050.8,135.5L1083.2,142.9L1113.0,154.4L1139.2,169.8L1160.6,188.5L1176.4,210.0L1185.7,233.5L1188.0,258.1L1182.9,282.9L1170.3,306.7L1150.6,328.6L1124.5,347.3L1093.0,362.1L1057.4,372.0L1019.6,376.6L981.3,375.5L944.3,368.9L910.4,357.2L881.2,340.9L858.0,320.9L841.5,298.2L832.3,273.9L830.6,249.1L836.2,224.9L848.6,202.0L867.0,181.5L890.7,163.9L918.7,149.9L949.8,139.8ZM982.9,134.0L976.8,107.5M982.9,134.0L1018.8,105.8M1017.0,132.5L1018.8,105.8M1017.0,132.5L1060.5,109.4M1050.8,135.5L1060.5,109.4M1050.8,135.5L1100.6,118.4M1083.2,142.9L1100.6,118.4M1083.2,142.9L1137.5,132.5M1113.0,154.4L1137.5,132.5M1113.0,154.4L1170.2,151.3M1139.2,169.8L1170.2,151.3M1139.2,169.8L1197.1,174.3M1160.6,188.5L1197.1,174.3M1160.6,188.5L1217.3,200.8M1176.4,210.0L1217.3,200.8M1176.4,210.0L1229.5,230.0M1185.7,233.5L1229.5,230.0M1185.7,233.5L1233.0,260.8M1188.0,258.1L1233.0,260.8M1188.0,258.1L1227.3,291.9M1182.9,282.9L1227.3,291.9M1182.9,282.9L1212.1,322.1M1170.3,306.7L1212.1,322.1M1170.3,306.7L1187.8,349.9M1150.6,328.6L1187.8,349.9M1150.6,328.6L1155.1,373.9M1124.5,347.3L1155.1,373.9M1124.5,347.3L1115.4,392.8M1093.0,362.1L1115.4,392.8M1093.0,362.1L1070.4,405.6M1057.4,372.0L1070.4,405.6M1057.4,372.0L1022.4,411.5M1019.6,376.6L1022.4,411.5M1019.6,376.6L973.7,410.1M981.3,375.5L973.7,410.1M981.3,375.5L926.8,401.6M944.3,368.9L926.8,401.6M944.3,368.9L884.1,386.5M910.4,357.2L884.1,386.5M910.4,357.2L847.4,365.6M881.2,340.9L847.4,365.6M881.2,340.9L818.5,340.0M858.0,320.9L818.5,340.0M858.0,320.9L798.3,311.3M841.5,298.2L798.3,311.3M841.5,298.2L787.5,280.7M832.3,273.9L787.5,280.7M832.3,273.9L786.0,249.6M830.6,249.1L786.0,249.6M830.6,249.1L793.6,219.3M836.2,224.9L793.6,219.3M836.2,224.9L809.6,191.0M848.6,202.0L809.6,191.0M848.6,202.0L832.9,165.7M867.0,181.5L832.9,165.7M867.0,181.5L862.6,144.1M890.7,163.9L862.6,144.1M890.7,163.9L897.4,127.0M918.7,149.9L897.4,127.0M918.7,149.9L935.9,114.7M949.8,139.8L935.9,114.7M949.8,139.8L976.8,107.5M976.8,107.5L1018.8,105.8L1060.5,109.4L1100.6,118.4L1137.5,132.5L1170.2,151.3L1197.1,174.3L1217.3,200.8L1229.5,230.0L1233.0,260.8L1227.3,291.9L1212.1,322.1L1187.8,349.9L1155.1,373.9L1115.4,392.8L1070.4,405.6L1022.4,411.5L973.7,410.1L926.8,401.6L884.1,386.5L847.4,365.6L818.5,340.0L798.3,311.3L787.5,280.7L786.0,249.6L793.6,219.3L809.6,191.0L832.9,165.7L862.6,144.1L897.4,127.0L935.9,114.7Z' stroke='#6c6c6c' stroke-width='1.0' fill='none'/></svg>
<svg class='b' style='left:700px;top:910px' width='100' height='100' viewBox='700 910 100 100'><path d='M733.9 967.5 V948' stroke='#3ad09a' stroke-width='1.6'/><path d='M730.4 948.4 L733.9 941.6 L737.4 948.4 Q733.9 950.2 730.4 948.4Z' fill='#10b010'/><text x='737.6' y='941' font-family='Liberation Sans' font-weight='bold' font-style='italic' font-size='16' fill='#00ee00'>Y</text><path d='M733.9 967.5 L764 960.2' stroke='#ff4060' stroke-width='1.6'/><path d='M763.3 957.2 L770.8 958.4 L764.6 962.6 Z' fill='#aa0000'/><text x='765.6' y='955' font-family='Liberation Sans' font-weight='bold' font-style='italic' font-size='16' fill='#ff0000'>X</text><path d='M733.9 967.5 L743.8 992' stroke='#0000ff' stroke-width='1.1'/><path d='M741.2 990.6 L746.6 989.4 L746.8 999 Z' fill='#0000bb'/><text x='746.4' y='987' font-family='Liberation Sans' font-weight='bold' font-style='italic' font-size='16' fill='#0000ff'>Z</text></svg>
<svg class='b' style='left:668px;top:32px;' width='16' height='14' viewBox='0 0 16 14'><rect x='1.4' y='1.7' width='13.2' height='10.8' rx='1.6' fill='none' stroke='#000' stroke-width='1.45'/><rect x='7.4' y='3.6' width='1.2' height='1.1' fill='#000'/><rect x='7.4' y='9.5' width='1.2' height='1.1' fill='#000'/><rect x='3.5' y='6.5' width='1' height='1.5' fill='#000'/><rect x='11.5' y='6.5' width='1' height='1.5' fill='#000'/></svg>
<svg class='b' style='left:692px;top:32px;' width='16' height='15' viewBox='0 0 16 15'><path d='M1.8 1.5V13' stroke='#555' stroke-width='1.3'/><path d='M1.8 13.3H14' stroke='#888' stroke-width='1.3'/><text x='2.8' y='11.4' font-family='Liberation Sans' font-size='11.5' textLength='11' lengthAdjust='spacingAndGlyphs' fill='#000' stroke='#000' stroke-width='0.35'>XY</text></svg>
<svg class='b' style='left:716px;top:32px;' width='16' height='15' viewBox='0 0 16 15'><path d='M1.8 1.5V13' stroke='#555' stroke-width='1.3'/><path d='M1.8 13.3H14' stroke='#888' stroke-width='1.3'/><text x='2.8' y='11.4' font-family='Liberation Sans' font-size='11.5' textLength='11' lengthAdjust='spacingAndGlyphs' fill='#000' stroke='#000' stroke-width='0.35'>YZ</text></svg>
<svg class='b' style='left:740px;top:32px;' width='16' height='15' viewBox='0 0 16 15'><path d='M1.8 1.5V13' stroke='#555' stroke-width='1.3'/><path d='M1.8 13.3H14' stroke='#888' stroke-width='1.3'/><text x='2.8' y='11.4' font-family='Liberation Sans' font-size='11.5' textLength='11' lengthAdjust='spacingAndGlyphs' fill='#000' stroke='#000' stroke-width='0.35'>XZ</text></svg>
<svg class='b' style='left:766px;top:32px;' width='12' height='14' viewBox='0 0 12 14'><path d='M6.3 2.2 A4.7 4.7 0 1 1 5.5 11.55' fill='none' stroke='#000' stroke-width='1.5'/><circle cx='3.5' cy='10.8' r='0.85' fill='#000'/><circle cx='1.8' cy='8.2' r='0.85' fill='#000'/><circle cx='1.9' cy='5.2' r='0.85' fill='#000'/><path d='M3.6 2.5 L7.2 0 L7.2 5.2Z' fill='#000'/></svg>
<svg class='b' style='left:790px;top:32px;' width='12' height='14' viewBox='0 0 12 14'><g transform='matrix(-1 0 0 1 12 0)'><path d='M6.3 2.2 A4.7 4.7 0 1 1 5.5 11.55' fill='none' stroke='#000' stroke-width='1.5'/><circle cx='3.5' cy='10.8' r='0.85' fill='#000'/><circle cx='1.8' cy='8.2' r='0.85' fill='#000'/><circle cx='1.9' cy='5.2' r='0.85' fill='#000'/><path d='M3.6 2.5 L7.2 0 L7.2 5.2Z' fill='#000'/></g></svg>
<svg class='b' style='left:813px;top:32px;' width='14' height='14' viewBox='0 0 14 14'><path d='M1.5 5.5 L5 2 H12.5 L11.5 9.5 L7.5 12.5 H1.5Z M1.5 5.5 H9 L12.5 2 M9 5.5 L7.5 12.5 M2 12 L9 5.5' fill='none' stroke='#000' stroke-width='1.6' stroke-linejoin='round' stroke-linecap='round'/></svg>
<svg class='b' style='left:836px;top:31px;' width='16' height='15' viewBox='0 0 16 15'><path d='M5.2 2.2 H10.8 L11.8 3.8 H14 Q15 3.8 15 4.8 V12.2 Q15 13.2 14 13.2 H2 Q1 13.2 1 12.2 V4.8 Q1 3.8 2 3.8 H4.2Z' fill='#000'/><circle cx='8' cy='8.4' r='2.9' fill='#fff'/><circle cx='8' cy='8.4' r='1.7' fill='#000'/></svg>
<svg class='b' style='left:864px;top:32px;' width='14' height='14' viewBox='0 0 14 14'><path d='M3.30 1.80 L12.30 3.00 L11.50 9.80 L6.50 12.00 L1.30 8.20Z M6.50 6.60L3.30 1.80 M6.50 6.60L11.50 9.80 M6.50 6.60L6.50 12.00 M6.50 6.60L1.30 8.20 M6.50 6.60L8.80 5.10' fill='none' stroke='#000' stroke-width='1.45' stroke-linejoin='round' stroke-linecap='round'/><circle cx='3.30' cy='1.80' r='1.05' fill='#000'/><circle cx='12.30' cy='3.00' r='1.05' fill='#000'/><circle cx='11.50' cy='9.80' r='1.05' fill='#000'/><circle cx='6.50' cy='12.00' r='1.05' fill='#000'/></svg>
<svg class='b' style='left:888px;top:32px;' width='14' height='14' viewBox='0 0 14 14'><circle cx='7' cy='7' r='5.6' fill='none' stroke='#000' stroke-width='1.6' stroke-linejoin='round' stroke-linecap='round'/><path d='M7 1.4 V7 M1.6 8 Q7 9.8 12.4 8 M7 7 Q5.5 10 6 12.5' fill='none' stroke='#000' stroke-width='1.6' stroke-linejoin='round' stroke-linecap='round' stroke-width='1.2'/></svg>
<svg class='b' style='left:911px;top:31px;' width='16' height='16' viewBox='0 0 16 16'><g fill='none' stroke='#000' stroke-width='1.5' stroke-linejoin='round'><path d='M1.5 4.5 L4.5 1.5 H14 V11.5 L11 14.5 H1.5Z'/><path d='M1.5 4.5 H11 V14.5 M11 4.5 L14 1.5'/></g><circle cx='11' cy='4.5' r='1' fill='#000'/></svg>
<svg class='b' style='left:936px;top:32px;' width='14' height='14' viewBox='0 0 14 14'><ellipse cx='7' cy='3.4' rx='5.4' ry='2.2' fill='none' stroke='#000' stroke-width='1.6' stroke-linejoin='round' stroke-linecap='round'/><path d='M1.6 3.4 V10.6 A5.4 2.2 0 0 0 12.4 10.6 V3.4' fill='none' stroke='#000' stroke-width='1.6' stroke-linejoin='round' stroke-linecap='round'/></svg>
<svg class='b' style='left:959px;top:32px;' width='16' height='14' viewBox='0 0 16 14'><path d='M8 1.2 L2 10 A6 2.6 0 0 0 14 10 Z' fill='none' stroke='#000' stroke-width='1.6' stroke-linejoin='round' stroke-linecap='round'/></svg>
<svg class='b' style='left:983px;top:33px;' width='16' height='12' viewBox='0 0 16 12'><ellipse cx='8' cy='6' rx='6.6' ry='4.6' fill='none' stroke='#000' stroke-width='1.6' stroke-linejoin='round' stroke-linecap='round'/><path d='M5.6 5.2 Q8 7.6 10.4 5.2' fill='none' stroke='#000' stroke-width='1.6' stroke-linejoin='round' stroke-linecap='round' stroke-width='1.4'/></svg>
<svg class='b' style='left:1374px;top:61px;' width='10' height='11' viewBox='0 0 10 11'><path d='M2.5 1.5 L7 5.5 L2.5 9.5' stroke='#000' stroke-width='1.6' fill='none'/></svg>
<div class='b' style='left:1367px;top:84px;width:24px;height:23px;background:#d9d6d3;border:1px solid #b6b3b0;border-radius:3px;box-sizing:border-box;'></div>
<svg class='b' style='left:1372px;top:88.5px;' width='14' height='14' viewBox='0 0 14 14'><path d='M3.20 1.40 L12.20 2.60 L11.40 9.40 L6.40 11.60 L1.20 7.80Z M6.40 6.20L3.20 1.40 M6.40 6.20L11.40 9.40 M6.40 6.20L6.40 11.60 M6.40 6.20L1.20 7.80 M6.40 6.20L8.70 4.70' fill='none' stroke='#000' stroke-width='1.45' stroke-linejoin='round' stroke-linecap='round'/><circle cx='3.20' cy='1.40' r='1.05' fill='#000'/><circle cx='12.20' cy='2.60' r='1.05' fill='#000'/><circle cx='11.40' cy='9.40' r='1.05' fill='#000'/><circle cx='6.40' cy='11.60' r='1.05' fill='#000'/></svg>
<div class='t' style='left:1395.50px;top:88.38px;font-size:13.33px;color:#000;font-weight:bold;letter-spacing:0.6px;'>Geometry</div>
<svg class='b' style='left:1559px;top:92px;' width='12' height='7' viewBox='0 0 12 7'><path d='M1 6 L11 6 L6 1Z' fill='#333'/></svg>
<div class='t' style='left:1395.50px;top:116.18px;font-size:13.33px;color:#000;'>Color</div>
<div class='b' style='left:1448px;top:112px;width:24px;height:23px;background:linear-gradient(#f4f4f4,#dcdcdc);border:1px solid #a5a5a5;border-radius:3px;box-sizing:border-box;'></div>
<div class='t' style='left:1395.50px;top:144.38px;font-size:13.33px;color:#000;'>Style</div>
<div class='b' style='left:1448px;top:140px;width:129px;height:23px;background:linear-gradient(#fbfaf9,#ebe8e5);border:1px solid #b1aeab;border-radius:3px;box-sizing:border-box;'></div>
<div class='t' style='left:1452.00px;top:143.68px;font-size:13.33px;color:#000;'>edges</div>
<svg class='b' style='left:1561px;top:148px;' width='10' height='6' viewBox='0 0 10 6'><path d='M1 1 L9 1 L5 5.5Z' fill='#444'/></svg>
<div class='t' style='left:1395.50px;top:172.38px;font-size:13.33px;color:#000;'>Opacity</div>
<div class='b' style='left:1448px;top:169px;width:129px;height:21px;background:#ffffff;border:1px solid #aaa7a4;border-radius:3px;box-sizing:border-box;'></div>
<div class='b' style='left:1562px;top:170px;width:1px;height:19px;background:#c9c6c3;'></div>
<div class='b' style='left:1563px;top:170px;width:13px;height:19px;background:linear-gradient(#f8f7f6,#ebe8e5);border-radius:0 2px 2px 0;'></div>
<div class='t' style='left:1452.00px;top:171.68px;font-size:13.33px;color:#000;'>1.00</div>
<svg class='b' style='left:1564px;top:171px;' width='12' height='7' viewBox='0 0 12 7'><path d='M1.5 5.5 L10.5 5.5 L6 1Z' fill='#b9b6b3'/></svg>
<svg class='b' style='left:1564px;top:180px;' width='12' height='7' viewBox='0 0 12 7'><path d='M1.5 1 L10.5 1 L6 5.5Z' fill='#4a4a4a'/></svg>
<div class='b' style='left:1396px;top:199px;width:14px;height:14px;background:#fff;border:1px solid #a9a6a3;box-sizing:border-box;border-radius:1px;'></div>
<div class='t' style='left:1414.40px;top:198.78px;font-size:13.33px;color:#000;'>Show normals</div>
<div class='t' style='right:137.00px;top:226.18px;font-size:13.33px;color:#bab7b4;'>Scale</div>
<div class='b' style='left:1448px;top:222px;width:129px;height:23px;background:#edeae6;border:1px solid #aaa7a4;border-radius:3px;box-sizing:border-box;'></div>
<div class='t' style='left:1452.00px;top:225.68px;font-size:13.33px;color:#bab7b4;'>0.005</div>
<div class='t' style='right:137.00px;top:253.88px;font-size:13.33px;color:#bab7b4;'>Color</div>
<div class='b' style='left:1448px;top:250px;width:24px;height:23px;background:linear-gradient(#8282ff,#4646ff);border:1px solid #0a0acc;border-radius:3px;box-sizing:border-box;'></div>
<div class='t' style='right:137.00px;top:281.88px;font-size:13.33px;color:#bab7b4;'>Count</div>
<div class='b' style='left:1448px;top:278px;width:129px;height:23px;background:#edeae6;border:1px solid #aaa7a4;border-radius:3px;box-sizing:border-box;'></div>
<div class='t' style='left:1452.00px;top:281.68px;font-size:13.33px;color:#bab7b4;'>10000</div>
<svg class='b' style='left:1372px;top:325px;' width='14' height='14' viewBox='0 0 14 14'><rect x='0.9' y='0.9' width='12.2' height='12.2' rx='1.5' fill='none' stroke='#222' stroke-width='1.8'/><path d='M4.9 1v12M9.1 1v12M1 4.9h12M1 9.1h12' stroke='#222' stroke-width='1.6'/></svg>
<div class='t' style='left:1395.50px;top:324.98px;font-size:13.33px;color:#000;font-weight:bold;letter-spacing:0.6px;'>Background mesh</div>
<svg class='b' style='left:1559px;top:329px;' width='12' height='7' viewBox='0 0 12 7'><path d='M1 6 L11 6 L6 1Z' fill='#333'/></svg>
<div class='t' style='left:1395.50px;top:353.28px;font-size:13.33px;color:#000;'>Color</div>
<div class='b' style='left:1448px;top:349px;width:24px;height:23px;background:linear-gradient(#c4e2ff,#8cc4f4);border:1px solid #4a96da;border-radius:3px;box-sizing:border-box;'></div>
<div class='t' style='left:1395.50px;top:381.38px;font-size:13.33px;color:#000;'>Style</div>
<div class='b' style='left:1448px;top:378px;width:129px;height:22px;background:linear-gradient(#fbfaf9,#ebe8e5);border:1px solid #b1aeab;border-radius:3px;box-sizing:border-box;'></div>
<div class='t' style='left:1452.00px;top:381.18px;font-size:13.33px;color:#000;'>wire</div>
<svg class='b' style='left:1561px;top:386px;' width='10' height='6' viewBox='0 0 10 6'><path d='M1 1 L9 1 L5 5.5Z' fill='#444'/></svg>
<div class='t' style='left:1395.50px;top:409.18px;font-size:13.33px;color:#000;'>Opacity</div>
<div class='b' style='left:1448px;top:406px;width:129px;height:21px;background:#ffffff;border:1px solid #aaa7a4;border-radius:3px;box-sizing:border-box;'></div>
<div class='b' style='left:1562px;top:407px;width:1px;height:19px;background:#c9c6c3;'></div>
<div class='b' style='left:1563px;top:407px;width:13px;height:19px;background:linear-gradient(#f8f7f6,#ebe8e5);border-radius:0 2px 2px 0;'></div>
<div class='t' style='left:1452.00px;top:408.68px;font-size:13.33px;color:#000;'>1.00</div>
<svg class='b' style='left:1564px;top:408px;' width='12' height='7' viewBox='0 0 12 7'><path d='M1.5 5.5 L10.5 5.5 L6 1Z' fill='#b9b6b3'/></svg>
<svg class='b' style='left:1564px;top:417px;' width='12' height='7' viewBox='0 0 12 7'><path d='M1.5 1 L10.5 1 L6 5.5Z' fill='#4a4a4a'/></svg>
<svg class='b' style='left:1373px;top:443px;' width='12' height='12' viewBox='0 0 12 12'><rect x='0.6' y='0.6' width='10.8' height='10.8' fill='none' stroke='#555' stroke-width='1.2'/><path d='M6 3v6M3 6h6' stroke='#777' stroke-width='1' stroke-dasharray='1 1'/></svg>
<div class='t' style='left:1395.50px;top:442.18px;font-size:13.33px;color:#000;font-weight:bold;letter-spacing:0.6px;'>Boundary mesh</div>
<svg class='b' style='left:1559px;top:447px;' width='12' height='7' viewBox='0 0 12 7'><path d='M1 6 L11 6 L6 1Z' fill='#333'/></svg>
<div class='t' style='left:1395.50px;top:470.08px;font-size:13.33px;color:#bab7b4;'>Color by</div>
<div class='b' style='left:1451px;top:466px;width:126px;height:23px;background:linear-gradient(#fbfaf9,#ebe8e5);border:1px solid #b1aeab;border-radius:3px;box-sizing:border-box;'></div>
<div class='t' style='left:1455.00px;top:469.68px;font-size:13.33px;color:#bab7b4;'>bc_id</div>
<svg class='b' style='left:1561px;top:474px;' width='10' height='6' viewBox='0 0 10 6'><path d='M1 1 L9 1 L5 5.5Z' fill='#d0cdca'/></svg>
<div class='t' style='left:1395.50px;top:498.58px;font-size:13.33px;color:#bab7b4;'>Style</div>
<div class='b' style='left:1451px;top:494px;width:126px;height:23px;background:linear-gradient(#fbfaf9,#ebe8e5);border:1px solid #b1aeab;border-radius:3px;box-sizing:border-box;'></div>
<div class='t' style='left:1455.00px;top:497.68px;font-size:13.33px;color:#bab7b4;'>edges</div>
<svg class='b' style='left:1561px;top:502px;' width='10' height='6' viewBox='0 0 10 6'><path d='M1 1 L9 1 L5 5.5Z' fill='#d0cdca'/></svg>
<div class='t' style='left:1395.50px;top:526.38px;font-size:13.33px;color:#bab7b4;'>Opacity</div>
<div class='b' style='left:1451px;top:523px;width:126px;height:21px;background:#edeae6;border:1px solid #aaa7a4;border-radius:3px;box-sizing:border-box;'></div>
<div class='b' style='left:1562px;top:524px;width:1px;height:19px;background:#c9c6c3;'></div>
<div class='b' style='left:1563px;top:524px;width:13px;height:19px;background:linear-gradient(#f8f7f6,#ebe8e5);border-radius:0 2px 2px 0;'></div>
<div class='t' style='left:1455.00px;top:525.68px;font-size:13.33px;color:#bab7b4;'>1.00</div>
<svg class='b' style='left:1564px;top:534px;' width='12' height='7' viewBox='0 0 12 7'><path d='M1.5 1 L10.5 1 L6 5.5Z' fill='#cfccc9'/></svg>
<svg class='b' style='left:1372px;top:559px;' width='14' height='14' viewBox='0 0 14 14'><g fill='none' stroke='#666' stroke-width='1.1'><path d='M1 3.5 L3.5 1 H13 V10.5 L10.5 13 H1Z'/><path d='M1 3.5 H10.5 V13 M10.5 3.5 L13 1'/><path d='M4 3.5V13M7 3.5V13M1 6.5H10.5M1 9.5H10.5'/></g></svg>
<div class='t' style='left:1395.50px;top:558.98px;font-size:13.33px;color:#000;font-weight:bold;letter-spacing:0.6px;'>Mesh</div>
<svg class='b' style='left:1559px;top:563px;' width='12' height='7' viewBox='0 0 12 7'><path d='M1 6 L11 6 L6 1Z' fill='#333'/></svg>
<div class='b' style='left:1396px;top:583px;width:181px;height:23px;background:linear-gradient(#fbfaf9,#ebe8e5);border:1px solid #b1aeab;border-radius:3px;box-sizing:border-box;'></div>
<div class='t' style='left:1386.50px;width:200px;text-align:center;top:587.18px;font-size:13.33px;color:#000;'>Reload</div>
<div class='t' style='left:1395.50px;top:615.38px;font-size:13.33px;color:#000;'>Color by</div>
<div class='b' style='left:1463px;top:611px;width:114px;height:23px;background:linear-gradient(#fbfaf9,#ebe8e5);border:1px solid #b1aeab;border-radius:3px;box-sizing:border-box;'></div>
<div class='t' style='left:1467.00px;top:614.68px;font-size:13.33px;color:#bab7b4;'></div>
<svg class='b' style='left:1561px;top:619px;' width='10' height='6' viewBox='0 0 10 6'><path d='M1 1 L9 1 L5 5.5Z' fill='#d0cdca'/></svg>
<div class='t' style='left:1395.50px;top:643.98px;font-size:13.33px;color:#000;'>Color map</div>
<div class='b' style='left:1463px;top:640px;width:114px;height:23px;background:linear-gradient(#fbfaf9,#ebe8e5);border:1px solid #b1aeab;border-radius:3px;box-sizing:border-box;'></div>
<div class='b' style='left:1470px;top:648px;width:15px;height:6px;background:linear-gradient(90deg,#f9f9f9,#8c8c8c);opacity:0.6;'></div>
<div class='t' style='left:1487.50px;top:643.68px;font-size:13.33px;color:#bab7b4;'>pinks</div>
<svg class='b' style='left:1561px;top:648px;' width='10' height='6' viewBox='0 0 10 6'><path d='M1 1 L9 1 L5 5.5Z' fill='#d0cdca'/></svg>
<div class='t' style='left:1395.50px;top:672.38px;font-size:13.33px;color:#000;'>Style</div>
<div class='b' style='left:1463px;top:668px;width:114px;height:23px;background:linear-gradient(#fbfaf9,#ebe8e5);border:1px solid #b1aeab;border-radius:3px;box-sizing:border-box;'></div>
<div class='t' style='left:1467.30px;top:671.68px;font-size:13.33px;color:#bab7b4;'>solid</div>
<svg class='b' style='left:1561px;top:676px;' width='10' height='6' viewBox='0 0 10 6'><path d='M1 1 L9 1 L5 5.5Z' fill='#d0cdca'/></svg>
<div class='t' style='left:1395.50px;top:700.08px;font-size:13.33px;color:#000;'>Opacity</div>
<div class='b' style='left:1463px;top:697px;width:114px;height:21px;background:#edeae6;border:1px solid #aaa7a4;border-radius:3px;box-sizing:border-box;'></div>
<div class='b' style='left:1562px;top:698px;width:1px;height:19px;background:#c9c6c3;'></div>
<div class='b' style='left:1563px;top:698px;width:13px;height:19px;background:linear-gradient(#f8f7f6,#ebe8e5);border-radius:0 2px 2px 0;'></div>
<div class='t' style='left:1467.30px;top:699.68px;font-size:13.33px;color:#bab7b4;'>1.00</div>
<svg class='b' style='left:1564px;top:708px;' width='12' height='7' viewBox='0 0 12 7'><path d='M1.5 1 L10.5 1 L6 5.5Z' fill='#cfccc9'/></svg>
<svg class='b' style='left:1372px;top:733px;' width='14' height='14' viewBox='0 0 14 14'><g fill='none' stroke='#222' stroke-width='1.5'><path d='M1.2 4 L4 1.2 H12.8 V10 L10 12.8 H1.2Z'/><path d='M1.2 4 H10 V12.8 M10 4 L12.8 1.2'/><path d='M4 1.2 V10 H12.8 M4 10 L1.2 12.8' stroke-width='1'/></g></svg>
<div class='t' style='left:1395.50px;top:733.38px;font-size:13.33px;color:#000;font-weight:bold;letter-spacing:0.6px;'>Regions</div>
<svg class='b' style='left:1559px;top:737px;' width='12' height='7' viewBox='0 0 12 7'><path d='M1 6 L11 6 L6 1Z' fill='#333'/></svg>
<div class='t' style='left:1395.50px;top:761.28px;font-size:13.33px;color:#000;'>Style</div>
<div class='b' style='left:1448px;top:757px;width:129px;height:23px;background:linear-gradient(#fbfaf9,#ebe8e5);border:1px solid #b1aeab;border-radius:3px;box-sizing:border-box;'></div>
<div class='t' style='left:1452.00px;top:760.68px;font-size:13.33px;color:#000;'>solid</div>
<svg class='b' style='left:1561px;top:765px;' width='10' height='6' viewBox='0 0 10 6'><path d='M1 1 L9 1 L5 5.5Z' fill='#444'/></svg>
<div class='t' style='left:1395.50px;top:789.18px;font-size:13.33px;color:#000;'>Opacity</div>
<div class='b' style='left:1448px;top:786px;width:129px;height:21px;background:#ffffff;border:1px solid #aaa7a4;border-radius:3px;box-sizing:border-box;'></div>
<div class='b' style='left:1562px;top:787px;width:1px;height:19px;background:#c9c6c3;'></div>
<div class='b' style='left:1563px;top:787px;width:13px;height:19px;background:linear-gradient(#f8f7f6,#ebe8e5);border-radius:0 2px 2px 0;'></div>
<div class='t' style='left:1452.00px;top:788.68px;font-size:13.33px;color:#000;'>0.50</div>
<svg class='b' style='left:1564px;top:788px;' width='12' height='7' viewBox='0 0 12 7'><path d='M1.5 5.5 L10.5 5.5 L6 1Z' fill='#4a4a4a'/></svg>
<svg class='b' style='left:1564px;top:797px;' width='12' height='7' viewBox='0 0 12 7'><path d='M1.5 1 L10.5 1 L6 5.5Z' fill='#4a4a4a'/></svg>
<div class='b' style='left:1367px;top:818px;width:24px;height:23px;background:#d9d6d3;border:1px solid #b6b3b0;border-radius:3px;box-sizing:border-box;'></div>
<svg class='b' style='left:1372px;top:822px;' width='14' height='14' viewBox='0 0 14 14'><path d='M5 1.5 V9.5 L1.5 12.5 M5 9.5 H12.5' stroke='#111' stroke-width='1.4' fill='none'/></svg>
<div class='t' style='left:1395.50px;top:822.38px;font-size:13.33px;color:#000;font-weight:bold;letter-spacing:0.6px;'>Axes</div>
<div class='b' style='left:0px;top:0px;width:1px;height:1114px;background:#4a4a4a;'></div>
<div class='b' style='left:1579px;top:0px;width:1px;height:1114px;background:#4a4a4a;'></div>
<div class='b' style='left:1px;top:1076px;width:1578px;height:30px;background:#dfdfdf;'></div>
<div class='b' style='left:2px;top:1079px;width:54px;height:23px;background:#b5b5b5;border:1px solid #8e8e8e;border-radius:3px;box-sizing:border-box;'></div>
<div class='t' style='left:3.50px;top:1083.38px;font-size:13.33px;color:#1f80ff;font-weight:bold;letter-spacing:0.5px;'>Mesher</div>
<div class='t' style='left:60.70px;top:1083.38px;font-size:13.33px;color:#8f8f8f;'>Modeler</div>
<div class='t' style='left:120.00px;top:1083.38px;font-size:13.33px;color:#8f8f8f;'>Nodeworks</div>
<div class='t' style='left:199.00px;top:1083.38px;font-size:13.33px;color:#000;'>Editor</div>
<div class='t' style='left:246.00px;top:1083.38px;font-size:13.33px;color:#000;'>History</div>
<div class='t' style='left:299.50px;top:1083.38px;font-size:13.33px;color:#000;'>Python</div>
<div class='t' style='right:10.00px;top:1083.38px;font-size:13.33px;color:#000;'>Ready</div>
<div class='b' style='left:1px;top:1106px;width:1578px;height:1px;background:#555;'></div>
<div class='b' style='left:1px;top:1107px;width:1578px;height:6px;background:#e6e6e6;'></div>
<div class='b' style='left:1px;top:1107px;width:21px;height:6px;background:#6a6a66;'></div>
<div class='b' style='left:1558px;top:1107px;width:21px;height:6px;background:#6a6a66;'></div>
<div class='b' style='left:0px;top:1113px;width:1580px;height:1px;background:#4a4a4a;'></div>
</body></html>
